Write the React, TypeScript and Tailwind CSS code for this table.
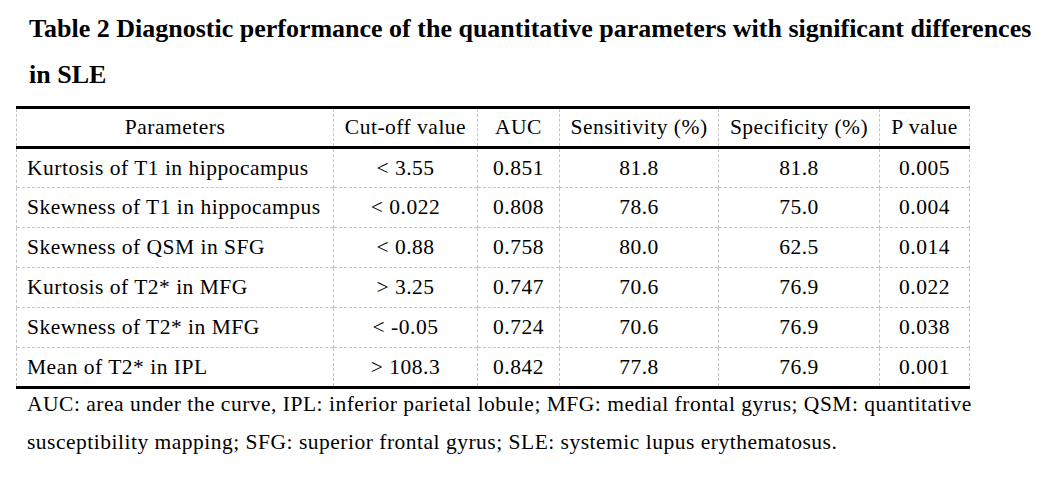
const rows = [
  ['Kurtosis of T1 in hippocampus', '< 3.55', '0.851', '81.8', '81.8', '0.005'],
  ['Skewness of T1 in hippocampus', '< 0.022', '0.808', '78.6', '75.0', '0.004'],
  ['Skewness of QSM in SFG', '< 0.88', '0.758', '80.0', '62.5', '0.014'],
  ['Kurtosis of T2* in MFG', '> 3.25', '0.747', '70.6', '76.9', '0.022'],
  ['Skewness of T2* in MFG', '< -0.05', '0.724', '70.6', '76.9', '0.038'],
  ['Mean of T2* in IPL', '> 108.3', '0.842', '77.8', '76.9', '0.001'],
];

const headers = ['Parameters', 'Cut-off value', 'AUC', 'Sensitivity (%)', 'Specificity (%)', 'P value'];
const widths = ['w-[317px]', 'w-[144px]', 'w-[82px]', 'w-[159px]', 'w-[161px]', 'w-[90px]'];

export default function App() {
  return (
    <div className="w-[1060px] h-[484px] bg-white text-black overflow-hidden font-['Liberation_Serif',serif]">
      <h1 className="pl-[29px] pt-[6px] text-[26px] font-bold leading-[46px] font-['Liberation_Serif',serif]">
        Table 2 Diagnostic performance of the quantitative parameters with significant differences
        <br />
        in SLE
      </h1>
      <table className="ml-[16px] mt-[8px] border-collapse table-fixed w-[953px] text-[21.5px] tracking-[0.5px] font-['Liberation_Serif',serif]">
        <thead>
          <tr className="h-[40px] border-t-[3px] border-b-[3px] border-black">
            {headers.map((h, i) => (
              <th
                key={h}
                className={`${widths[i]} font-normal text-center border-x border-dashed border-x-[#c4c4c4] p-0`}
              >
                {h}
              </th>
            ))}
          </tr>
        </thead>
        <tbody>
          {rows.map((r, ri) => (
            <tr
              key={r[0]}
              className={`h-[40px] ${ri === rows.length - 1 ? 'border-b-[3px] border-black' : 'border-b border-dashed border-b-[#c4c4c4]'}`}
            >
              {r.map((c, ci) => (
                <td
                  key={ci}
                  className={`border-x border-dashed border-x-[#c4c4c4] p-0 ${ci === 0 ? 'text-left pl-[10px]' : 'text-center'}`}
                >
                  {c}
                </td>
              ))}
            </tr>
          ))}
        </tbody>
      </table>
      <p className="pl-[27px] -mt-[4px] text-[21.5px] tracking-[0.5px] leading-[38px] font-['Liberation_Serif',serif]">
        AUC: area under the curve, IPL: inferior parietal lobule; MFG: medial frontal gyrus; QSM: quantitative
        <br />
        susceptibility mapping; SFG: superior frontal gyrus; SLE: systemic lupus erythematosus.
      </p>
    </div>
  );
}
